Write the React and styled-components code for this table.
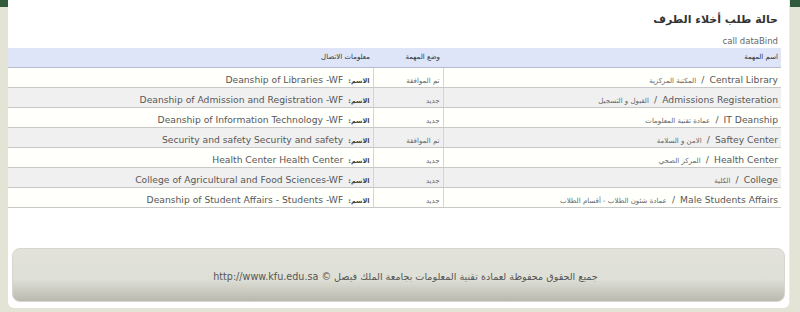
import React from 'react';
import styled, { createGlobalStyle } from 'styled-components';

const GlobalStyle = createGlobalStyle`
  html, body {
    margin: 0;
    padding: 0;
    background: #e3e3d6;
  }
  body {
    font-family: "DejaVu Sans", Verdana, sans-serif;
  }
`;

const Page = styled.div`
  display: grid;
  grid-template-columns: 8px minmax(0, 1fr) 10px;
  width: 800px;
  height: 312px;
  overflow: hidden;
`;

const Side = styled.div`
  background: linear-gradient(#2f5b3c 0 7px, #e3e3d6 7px);
`;

const Panel = styled.div`
  height: 308px;
  box-sizing: border-box;
  background: #fff;
  border-right: 1px solid #ecece0;
  border-radius: 0 0 6px 6px;
  display: flex;
  flex-direction: column;
  direction: rtl;
`;

const Content = styled.div`
  padding-right: 8px;
`;

const Title = styled.h2`
  margin: 0;
  height: 34px;
  padding-right: 3px;
  font-size: 11px;
  font-weight: bold;
  line-height: 40px;
  color: #333;
`;

const CallLine = styled.div`
  height: 14px;
  padding-right: 3px;
  font-size: 8.5px;
  line-height: 14px;
  color: #666;
  direction: ltr;
  text-align: right;
`;

const Table = styled.table`
  width: 773px;
  border-collapse: collapse;
  table-layout: fixed;
  border-bottom: 1px solid #e6e6ee;
`;

const HeadCell = styled.th`
  width: ${(p) => p.$w}px;
  box-sizing: border-box;
  height: 19px;
  padding: 0 3px;
  background: #dee5f8;
  border-bottom: 1px solid #b9bccb;
  font-size: 7px;
  font-weight: normal;
  color: #333;
  text-align: right;
`;

const Row = styled.tr`
  background: ${(p) => (p.$alt ? '#f0f0f0' : '#fffffc')};
`;

const Cell = styled.td`
  height: 19px;
  padding: 0 3px;
  border-bottom: 1px solid #c8c8c8;
  text-align: right;
  white-space: nowrap;
  overflow: hidden;
  &:not(:last-child) {
    border-left: 1px solid #d4d4d4;
  }
`;

const En = styled.span`
  font-size: 9.2px;
  color: #585858;
`;

const Ar = styled.span`
  font-size: 7px;
  color: #666;
`;

const Label = styled.b`
  font-size: 6.5px;
  color: #444;
`;

const Footer = styled.div`
  margin: auto 4px 6px 4px;
  height: 54px;
  box-sizing: border-box;
  border: 1px solid #d6d6cc;
  border-radius: 8px;
  background: linear-gradient(#e2e2db 0%, #dedfd6 58%, #b9b9af 100%);
  display: flex;
  align-items: center;
  justify-content: center;
  padding-top: 2px;
  padding-left: 14px;
  font-size: 9.6px;
  color: #555;
`;

const rows = [
  ['Central Library', 'المكتبة المركزية', 'تم الموافقة', 'Deanship of Libraries -WF'],
  ['Admissions Registeration', 'القبول و التسجيل', 'جديد', 'Deanship of Admission and Registration -WF'],
  ['IT Deanship', 'عمادة تقنية المعلومات', 'جديد', 'Deanship of Information Technology -WF'],
  ['Saftey Center', 'الامن و السلامة', 'تم الموافقة', 'Security and safety Security and safety'],
  ['Health Center', 'المركز الصحي', 'جديد', 'Health Center Health Center'],
  ['College', 'الكلية', 'جديد', 'College of Agricultural and Food Sciences-WF'],
  ['Male Students Affairs', 'عمادة شئون الطلاب - أقسام الطلاب', 'جديد', 'Deanship of Student Affairs - Students -WF'],
];

export default function App() {
  return (
    <>
      <GlobalStyle />
      <Page>
        <Side />
        <Panel>
          <Content>
            <Title>حالة طلب أخلاء الطرف</Title>
            <CallLine>call dataBind</CallLine>
            <Table>
              <thead>
                <tr>
                  <HeadCell $w={338}>اسم المهمة</HeadCell>
                  <HeadCell $w={70}>وضع المهمة</HeadCell>
                  <HeadCell $w={365}>معلومات الاتصال</HeadCell>
                </tr>
              </thead>
              <tbody>
                {rows.map(([en, ar, status, contact], i) => (
                  <Row key={en} $alt={i % 2 === 1}>
                    <Cell>
                      <En>{en}</En> <En>/</En> <Ar>{ar}</Ar>
                    </Cell>
                    <Cell>
                      <Ar>{status}</Ar>
                    </Cell>
                    <Cell>
                      <Label>الاسم:</Label> <En>{contact}</En>
                    </Cell>
                  </Row>
                ))}
              </tbody>
            </Table>
          </Content>
          <Footer>جميع الحقوق محفوظة لعمادة تقنية المعلومات بجامعة الملك فيصل © http://www.kfu.edu.sa</Footer>
        </Panel>
        <Side />
      </Page>
    </>
  );
}
